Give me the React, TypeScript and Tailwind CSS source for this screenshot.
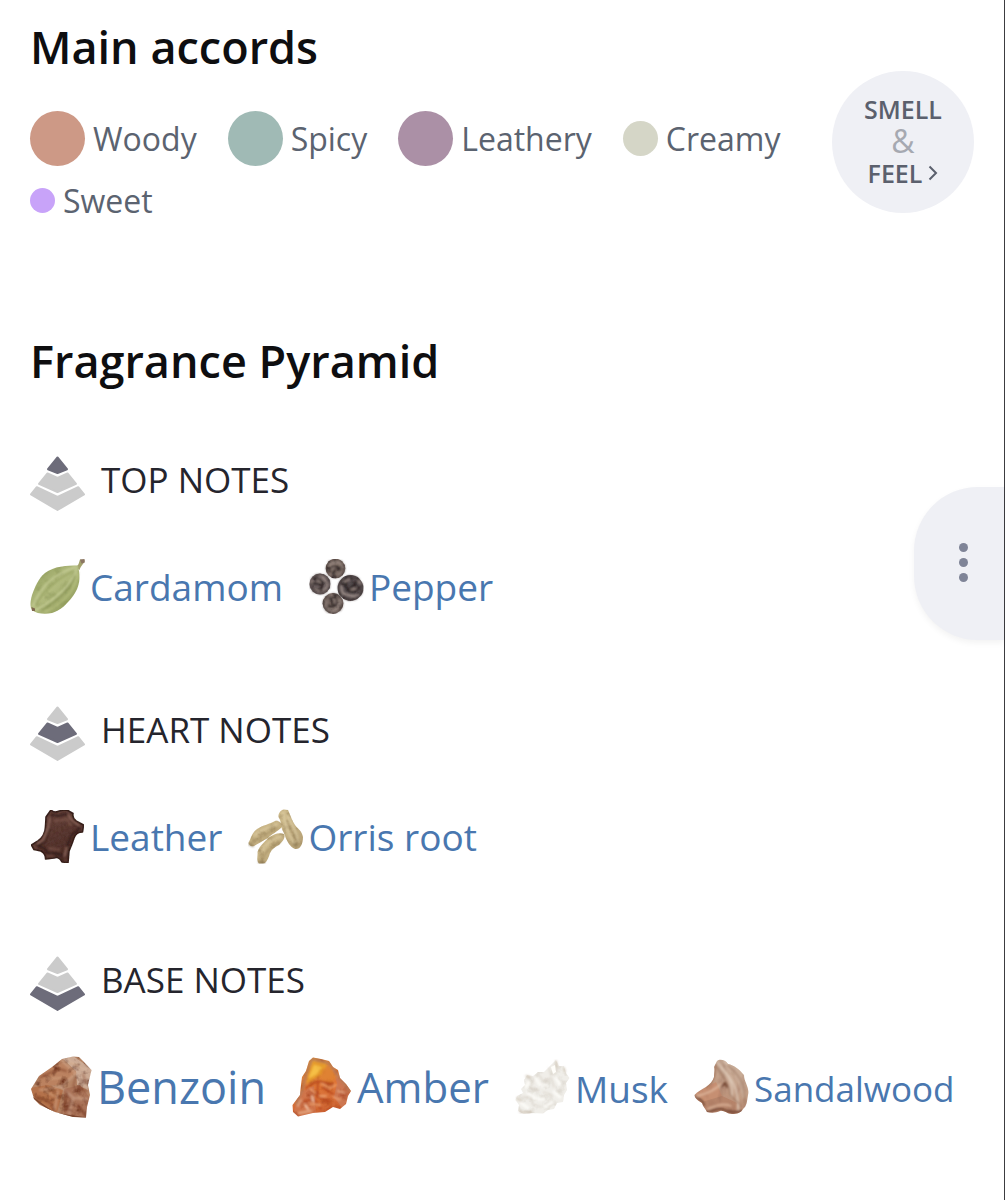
import type { ReactNode } from 'react';

type Tier = 'top' | 'heart' | 'base';

interface Note {
  name: string;
  icon: ReactNode;
  textClass: string;
}

interface NoteGroup {
  tier: Tier;
  title: string;
  notes: Note[];
}

const ACCORDS = [
  { name: 'Woody', dotClass: 'size-[55px] bg-[#cd9986]' },
  { name: 'Spicy', dotClass: 'size-[55px] bg-[#a0bab5]' },
  { name: 'Leathery', dotClass: 'size-[55px] bg-[#ab90a6]' },
  { name: 'Creamy', dotClass: 'size-[35px] bg-[#d5d6c7]' },
  { name: 'Sweet', dotClass: 'size-[25px] bg-[#c8a3f9]' },
];

// Mottled surface used by the ingredient drawings.
function Grain({ id, freq, color, amount }: { id: string; freq: string; color: string; amount: number }) {
  return (
    <filter id={id} x="0" y="0" width="100%" height="100%">
      <feTurbulence type="fractalNoise" baseFrequency={freq} numOctaves="3" seed="4" />
      <feColorMatrix values={`0 0 0 0 0  0 0 0 0 0  0 0 0 0 0  ${amount} 0 0 0 ${-amount * 0.45}`} result="n" />
      <feFlood floodColor={color} />
      <feComposite in2="n" operator="in" />
      <feComposite in2="SourceAlpha" operator="in" result="g" />
      <feMerge>
        <feMergeNode in="SourceGraphic" />
        <feMergeNode in="g" />
      </feMerge>
    </filter>
  );
}

// Softens creases and highlights so they sit in the surface.
function Soft({ id }: { id: string }) {
  return (
    <filter id={id} x="-10%" y="-10%" width="120%" height="120%">
      <feGaussianBlur stdDeviation="0.9" />
    </filter>
  );
}

function PyramidIcon({ active }: { active: Tier }) {
  const fill = (tier: Tier) => (tier === active ? '#6d6c7a' : '#cbcbcb');
  return (
    <svg viewBox="0 0 55 55" className="size-[55px] shrink-0" strokeLinejoin="round" strokeWidth="2" aria-hidden="true">
      <path d="M27.5 1.5 37 13.2 27.5 17 18 13.2Z" fill={fill('top')} stroke={fill('top')} />
      <path d="M17.5 17.5 27.5 22 37.5 17.5 46 27.8 27.5 36 9 27.8Z" fill={fill('heart')} stroke={fill('heart')} />
      <path d="M6.8 31.2 27.5 41 48.2 31.2 54 38.4 27.5 54 1 38.4Z" fill={fill('base')} stroke={fill('base')} />
    </svg>
  );
}

function CardamomIcon() {
  return (
    <svg viewBox="0 0 55 55" className="size-[55px] shrink-0" aria-hidden="true">
      <defs>
        <linearGradient id="cardamom" x1="0.1" y1="0.2" x2="0.8" y2="0.9">
          <stop offset="0" stopColor="#98a464" />
          <stop offset="0.45" stopColor="#b2bb7e" />
          <stop offset="1" stopColor="#929d5c" />
        </linearGradient>
        <Grain id="cardamomGrain" freq="0.12" color="#7c8848" amount={1} />
        <Soft id="cardamomSoft" />
      </defs>
      <path d="M46 8C49 6 49 3 50 0.5L54.5 1C55 4 51 6 49.5 11Z" fill="#a3a26c" />
      <path d="M50 0.5 54.5 0 54.8 3.5 51.5 4.5Z" fill="#8b7563" />
      <g filter="url(#cardamomGrain)">
        <path d="M48 6.5C37 6.5 24 7 15 14 8 20 5 28 2 36 0 43 0 48 2 51 7 55 15 55.5 22 54 31 51 37 45 43 37 51 26 50 17 48 6.5Z" fill="url(#cardamom)" />
      </g>
      <g fill="none" strokeLinecap="round" filter="url(#cardamomSoft)" opacity="0.85">
        <path d="M46 8C32 12 13 21 3 47" stroke="#ccd39e" strokeWidth="1.6" />
        <path d="M47 10C42 24 29 38 6 51" stroke="#cdd49f" strokeWidth="1.8" />
        <path d="M48 13C46 30 34 44 15 53" stroke="#bdc686" strokeWidth="1.5" />
        <path d="M43 12C30 19 14 29 6 46" stroke="#8e9a57" strokeWidth="1.1" />
        <path d="M45 17C39 32 27 42 12 51" stroke="#7f8b4b" strokeWidth="1.2" />
      </g>
      <path d="M1.5 48 5 49.5 5 52 2 52Z" fill="#80674f" />
    </svg>
  );
}

function PepperIcon() {
  const corns = [
    { x: 26.5, y: 9.5, r: 9.8, fill: '#75655d', turn: 0 },
    { x: 11, y: 25, r: 10.5, fill: '#675c5b', turn: 70 },
    { x: 41.5, y: 29, r: 12.9, fill: '#574e50', turn: 200 },
    { x: 24, y: 44.5, r: 10.4, fill: '#756660', turn: 130 },
  ];
  return (
    <svg viewBox="0 0 55 55" className="size-[55px] shrink-0" aria-hidden="true">
      <defs>
        <Grain id="pepperGrain" freq="0.18" color="#261c1d" amount={2.2} />
        <Soft id="pepperSoft" />
      </defs>
      <g filter="url(#pepperGrain)">
        {corns.map(c => (
          <circle key={c.x} cx={c.x} cy={c.y} r={c.r} fill={c.fill} />
        ))}
      </g>
      <g filter="url(#pepperSoft)">
        {corns.map(c => (
          <g key={c.x} transform={`translate(${c.x} ${c.y}) rotate(${c.turn}) scale(${c.r / 10})`} fill="none" strokeLinecap="round">
            <circle r="9" stroke="#463b3a" strokeWidth="1.2" strokeDasharray="5 3 3 2" />
            <path d="M-7-3C-4-7 0-5 2-6S6-4 7-1" stroke="#ab9b94" strokeWidth="1.4" />
            <path d="M-6 3C-5-1-2-3 1-2S6 2 4 5M-3 6C-1 4-2 2 0 0" stroke="#2b2223" strokeWidth="1.8" />
            <path d="M-4 1-1-1M3 6 6 3M-6 6-4 7" stroke="#9a8982" strokeWidth="1.5" />
          </g>
        ))}
      </g>
    </svg>
  );
}

function LeatherIcon() {
  return (
    <svg viewBox="0 0 55 55" className="size-[55px] shrink-0" aria-hidden="true">
      <defs>
        <linearGradient id="leather" x1="0.3" y1="0" x2="0.7" y2="1">
          <stop offset="0" stopColor="#65423a" />
          <stop offset="0.5" stopColor="#593831" />
          <stop offset="1" stopColor="#482b26" />
        </linearGradient>
        <Grain id="leatherGrain" freq="0.35" color="#321b17" amount={0.7} />
        <Soft id="leatherSoft" />
      </defs>
      <g filter="url(#leatherGrain)" strokeLinejoin="round">
        <path
          d="M21 1Q24 4 28 2.5T37 1L43 4.5Q42 9 46 12L53.5 16 52.5 23Q46 23 44 29T39 42L38 53.5 32 53Q29 47 24 49L15.5 50Q16 45 11 42L4 40.5 1.5 36 8 32Q15 27 15.5 18T16 8Z"
          fill="url(#leather)"
          stroke="#38231f"
          strokeWidth="1.6"
        />
      </g>
      <g fill="none" strokeLinejoin="round" filter="url(#leatherSoft)">
        <path
          d="M22 5.5 28 7 36 5 40.5 8 43.5 14 49 18 48 21.5 41.5 26 37.5 36 35.5 47 31 46 26 44.5 18 45 15.5 40 8 36.5 14 33 19 20 20 10Z"
          stroke="#2d1714"
          strokeWidth="1.6"
        />
        <path d="M20 8 18.5 18 13 31 7 34.5M38 5.5 42.5 12 49.5 17M36.5 38 34.5 48" stroke="#a3776a" strokeWidth="1.4" />
        <path d="M24 12 37 10 41 17M18 39 30 41" stroke="#7f574e" strokeWidth="1.8" opacity="0.8" />
        <path d="M4 37 6 40M16 47 24 47M34 51 37 51" stroke="#85594d" strokeWidth="1" />
      </g>
    </svg>
  );
}

function OrrisIcon() {
  return (
    <svg viewBox="0 0 55 55" className="size-[55px] shrink-0" aria-hidden="true">
      <defs>
        <linearGradient id="orris" x1="0" y1="0" x2="0.8" y2="1">
          <stop offset="0" stopColor="#d0bd8e" />
          <stop offset="0.5" stopColor="#c7b385" />
          <stop offset="1" stopColor="#b5a075" />
        </linearGradient>
        <Grain id="orrisGrain" freq="0.18" color="#8d774b" amount={1.4} />
        <Soft id="orrisSoft" />
      </defs>
      <g fill="url(#orris)" filter="url(#orrisGrain)">
        <path d="M36 0.5C33 1 30 4 30.5 8 34 13 32 18 36 24 38 31 42 38 47 40 52 41 55 35 55 28 54 22 50 20 47 16 44 12 42 5 40 1Z" />
        <path d="M0.5 34C3 29 4 24 9 20 15 16 22 15 27 12 31 11 35 15 34 18 29 23 24 25 20 29 14 32 10 35 6 37 3 38 1 36 0.5 34Z" />
        <path d="M11 54.5C8 51 10 47 9.5 43 12 36 16 34 20 29 26 25 31 23 36 25 38 29 34 33 31 36 27 38 24 40 22 44 21 48 19 52 17 54Z" />
      </g>
      <g fill="none" strokeLinecap="round" filter="url(#orrisSoft)" opacity="0.7">
        <path d="M35 3C37 14 39 24 46 34M40 7C42 15 49 20 50 33" stroke="#e4d5ae" strokeWidth="1.8" />
        <path d="M7 26C14 20 21 19 29 15M14 42C18 34 26 29 34 27" stroke="#e4d4ac" strokeWidth="1.8" />
        <path d="M3 34C12 28 20 24 29 19M15 50C17 42 24 37 32 33M44 22 50 34M39 12 43 20" stroke="#937d52" strokeWidth="1.2" />
        <path d="M1 35 5 37M11 53 16 54M46 35 49 36" stroke="#73613e" strokeWidth="1.8" />
      </g>
    </svg>
  );
}

function BenzoinIcon() {
  return (
    <svg viewBox="0 0 62 62" className="-my-1 size-[62px] shrink-0" aria-hidden="true">
      <defs>
        <Grain id="benzoinGrain" freq="0.13" color="#6b2d15" amount={2.3} />
        <Soft id="benzoinSoft" />
        <clipPath id="benzoinShape">
          <path d="M43 0.5 32 3 22 11 9 20 1 33 4 43 10 49 25 56 43 61 56 61.5 57 51 60 39 58 29 61.5 14 53 5 49 1Z" />
        </clipPath>
      </defs>
      <g clipPath="url(#benzoinShape)">
        <g filter="url(#benzoinGrain)">
          <path d="M0 0H62V62H0Z" fill="#b58465" />
          <path d="M30 3 47 17 34 28 9 31 9 20Z" fill="#bb8260" />
          <path d="M43 0 62 13 58 34 47 29 46 15 33 3Z" fill="#ccab95" />
          <path d="M0 32 18 29 33 34 27 57 7 47Z" fill="#b4724c" />
          <path d="M34 33 50 29 60 42 56 62 34 59Z" fill="#aa7359" />
        </g>
        <g fill="none" strokeLinecap="round" filter="url(#benzoinSoft)" opacity="0.7">
          <path d="M31 4 46 17 52 27M46 17 31 31 10 34M37 3 53 13 60 14M31 31 44 42 57 43M28 35 25 53M43 43 39 59" stroke="#dfbfa8" strokeWidth="1.8" opacity="0.7" />
          <path d="M11 21 29 13 36 15M8 41 22 48 24 55M48 31 56 35M48 49 54 58M37 37 34 51 42 55" stroke="#7a3a23" strokeWidth="1.8" />
          <path d="M17 23 31 22M40 7 49 10M14 34 24 40M47 37 51 44" stroke="#d7ab87" strokeWidth="1.5" />
          <path d="M35 34 41 46M46 20 43 31M53 18 56 27M28 59 37 53" stroke="#85472f" strokeWidth="1.3" />
        </g>
        <path d="M2 41 25 57.5 56 62" fill="none" stroke="#7c4830" strokeWidth="1.5" />
      </g>
    </svg>
  );
}

function AmberIcon() {
  return (
    <svg viewBox="0 0 60 60" className="-my-1 size-[60px] shrink-0" aria-hidden="true">
      <defs>
        <linearGradient id="amber" x1="0.3" y1="0" x2="0.6" y2="1">
          <stop offset="0" stopColor="#d98b3c" />
          <stop offset="0.5" stopColor="#de7639" />
          <stop offset="1" stopColor="#ca6034" />
        </linearGradient>
        <Grain id="amberGrain" freq="0.12" color="#a63c14" amount={1.8} />
        <Soft id="amberSoft" />
        <clipPath id="amberShape">
          <path d="M21 0.5 29 2 37 4 41 10 46 13 48 21 54 27 59 34 56 39 54 47 48 52 41 50 33 55 21 56 6 59.5 1 55 0.5 48 8 38 9 28 10 20 14 14 17 4Z" />
        </clipPath>
      </defs>
      <g clipPath="url(#amberShape)">
        <g filter="url(#amberGrain)">
          <path d="M0 0H60V60H0Z" fill="url(#amber)" />
          <path d="M8 35 22 29 24 59 0 60Z" fill="#d0754c" />
          <path d="M39 8 59 34 51 52 42 40 45 26Z" fill="#cd7751" />
        </g>
        <g filter="url(#amberSoft)" opacity="0.85">
          <path d="M20 3 35 7 32 16 14 27Z" fill="#e9a12b" />
          <path d="M22 8 30 10 25 17 16 22Z" fill="#fbcb48" />
          <path d="M31 12 40 9 46 20 38 26 27 22Z" fill="#e08431" opacity="0.8" />
          <g fill="none" strokeLinecap="round">
            <path d="M20 2 14 17 11 31 4 47M20 2 37 6 47 20 58 34" stroke="#b57d58" strokeWidth="2.4" />
            <path d="M14 31 26 24 40 27M26 25 25 39 38 45M31 31 41 37M12 44 22 42 29 52" stroke="#b3421a" strokeWidth="1.8" />
            <path d="M18 32 23 36M30 27 38 31 44 28M28 39 34 39M18 47 28 48M41 40 48 43" stroke="#f3aa78" strokeWidth="1.8" />
            <path d="M6 49 9 43M7 56 19 54M46 34 53 36" stroke="#eab895" strokeWidth="1.8" />
            <path d="M13 48 16 52M20 39 21 44" stroke="#fde1c9" strokeWidth="1.8" />
          </g>
        </g>
      </g>
    </svg>
  );
}

function MuskIcon() {
  return (
    <svg viewBox="0 0 55 55" className="size-[55px] shrink-0" aria-hidden="true">
      <defs>
        <Grain id="muskGrain" freq="0.14" color="#cfc9be" amount={1.6} />
        <Soft id="muskSoft" />
      </defs>
      <g filter="url(#muskGrain)">
        <path
          d="M41 1 44 7 49 7 51 14 54.5 19 51 24 52 31 49 36 48 43 42 44 39 50 33 51 28 54.5 16 54 9 55 3 52 4 46 0.5 41 2 37 8 34 6 30 10 26 9 21 12 16 18 17 23 13 29 13 33 9 37 5Z"
          fill="#f0eee9"
        />
      </g>
      <g fill="none" strokeLinecap="round" strokeLinejoin="round" filter="url(#muskSoft)" opacity="0.8">
        <path d="M34 9 36 16 41 15 40 5M12 19 18 23 15 29 24 31M24 16 28 22 36 19 39 28M8 38 16 38 18 46 27 48M28 33 37 36 34 46" stroke="#d3ccc1" strokeWidth="1.2" />
        <path d="M14 23 11 28M21 20 25 26 32 26M41 19 45 26M13 34 21 40 29 40M6 44 13 49M30 48 37 43M39 33 45 38" stroke="#fffefb" strokeWidth="3" />
        <path d="M41 2 42 8M49 9 50 13M11 17 15 18M2 39 6 42M5 53 16 53" stroke="#c2b39f" strokeWidth="1.4" />
      </g>
      <path d="M36 8 40 6 41 13 38 15Z" fill="#fffefa" />
    </svg>
  );
}

function SandalwoodIcon() {
  return (
    <svg viewBox="0 0 55 55" className="size-[55px] shrink-0" aria-hidden="true">
      <defs>
        <linearGradient id="sandal" x1="0.7" y1="0" x2="0.2" y2="1">
          <stop offset="0" stopColor="#cdb4a0" />
          <stop offset="0.5" stopColor="#c09a82" />
          <stop offset="1" stopColor="#b07a60" />
        </linearGradient>
        <Grain id="sandalGrain" freq="0.12 0.06" color="#89594a" amount={0.9} />
        <Soft id="sandalSoft" />
        <clipPath id="sandalShape">
          <path d="M23 2C25 0 31 0 34 5 40 6 46 11 50 16 50 23 56 29 54 36 53 42 53 47 49 50 47 54 43 55 38 55 33 55 30 51 26 52 22 54 17 54 13 53 11 49 9 48 8 44 5 42 1 40 0.5 36 3 33 8 30 12 28 16 25 19 22 20 18 20 14 21 11 20 8 23 2Z" />
        </clipPath>
      </defs>
      <g clipPath="url(#sandalShape)">
        <g filter="url(#sandalGrain)">
          <path d="M0 0H55V55H0Z" fill="url(#sandal)" />
          <path d="M1 34 22 23 28 37 12 44Z" fill="#c68f72" />
          <path d="M8 43 28 37 43 44 44 55 12 54Z" fill="#b6846a" />
        </g>
        <g fill="none" strokeLinecap="round" filter="url(#sandalSoft)">
          <path d="M24 4C31 14 45 22 44 50M27 9C36 17 39 26 38 38M30 2C44 12 48 24 50 38" stroke="#dcc6b4" strokeWidth="1.8" />
          <path d="M23 8C32 21 36 29 36 35 39 41 46 43 47 48M34 6C46 16 50 26 51 44" stroke="#9b735c" strokeWidth="1.2" />
          <path d="M3 37C12 35 21 31 27 25M14 50C22 46 30 44 37 47" stroke="#dcb49a" strokeWidth="1.8" />
          <path d="M1 38C7 40 9 42 10 46M28 27 31 24 33 28M11 53C19 52 23 49 28 50 33 53 39 54 48 52" stroke="#6e402d" strokeWidth="1.8" />
          <path d="M22 5C20 14 22 20 12 28" stroke="#9b6a50" strokeWidth="1.6" />
        </g>
      </g>
    </svg>
  );
}

const GROUPS: NoteGroup[] = [
  {
    tier: 'top',
    title: 'TOP NOTES',
    notes: [
      { name: 'Cardamom', icon: <CardamomIcon />, textClass: 'text-[37px]' },
      { name: 'Pepper', icon: <PepperIcon />, textClass: 'text-[37px]' },
    ],
  },
  {
    tier: 'heart',
    title: 'HEART NOTES',
    notes: [
      { name: 'Leather', icon: <LeatherIcon />, textClass: 'text-[37px]' },
      { name: 'Orris root', icon: <OrrisIcon />, textClass: 'text-[37px]' },
    ],
  },
  {
    tier: 'base',
    title: 'BASE NOTES',
    notes: [
      { name: 'Benzoin', icon: <BenzoinIcon />, textClass: 'text-[45px]' },
      { name: 'Amber', icon: <AmberIcon />, textClass: 'text-[42px]' },
      { name: 'Musk', icon: <MuskIcon />, textClass: 'text-[37px] pt-1' },
      { name: 'Sandalwood', icon: <SandalwoodIcon />, textClass: 'text-[35px] pt-1' },
    ],
  },
];

export default function App() {
  return (
    <div className="relative min-h-screen bg-white border-r border-[#3c3c40] px-[30px] pt-[25px] pb-20 font-['Open_Sans','Noto_Sans',sans-serif]">
      {/* Main accords */}
      <section>
        <h2 className="text-[45px] leading-[44px] font-semibold text-[#0e0e10]">Main accords</h2>
        <div className="mt-0.5 flex items-start justify-between gap-5">
          <ul className="flex flex-1 flex-wrap items-center gap-x-[31px] gap-y-3 pt-10">
            {ACCORDS.map(a => (
              <li key={a.name} className="flex items-center gap-2 text-[32px] leading-[45px] text-[#5b6370]">
                <span className={`rounded-full shrink-0 ${a.dotClass}`} />
                {a.name}
              </li>
            ))}
          </ul>
          <button
            type="button"
            className="flex size-[142px] shrink-0 flex-col items-center justify-center rounded-full bg-[#eff0f5] pb-0.5 text-[25px] leading-8 font-semibold text-[#5b606d] cursor-pointer"
          >
            <span>SMELL</span>
            <span className="text-[32px] leading-8 font-normal text-[#a6a9b1]">&amp;</span>
            <span className="flex items-center gap-1.5">
              FEEL
              <svg viewBox="0 0 10 16" className="h-4 w-2.5" fill="none" stroke="currentColor" strokeWidth="2" aria-hidden="true">
                <path d="M1.5 1.5 8 8 1.5 14.5" />
              </svg>
            </span>
          </button>
        </div>
      </section>

      {/* Fragrance pyramid */}
      <section className="mt-[116px]">
        <h2 className="text-[45px] leading-[44px] font-semibold text-[#0e0e10]">Fragrance Pyramid</h2>
        <div className="mt-[73px] flex flex-col gap-[92px]">
          {GROUPS.map(g => (
            <div key={g.tier} className="flex flex-col gap-12">
              <h3 className="flex items-start gap-4 text-[35px] leading-[48px] text-[#25252d]">
                <PyramidIcon active={g.tier} />
                {g.title}
              </h3>
              <div className="flex flex-wrap items-center gap-x-[26px] gap-y-4">
                {g.notes.map(n => (
                  <a key={n.name} href="#" className="flex items-center gap-[5px] leading-[50px] text-[#4977af]">
                    {n.icon}
                    <span className={n.textClass}>{n.name}</span>
                  </a>
                ))}
              </div>
            </div>
          ))}
        </div>
      </section>

      {/* Side menu handle */}
      <button
        type="button"
        aria-label="More"
        className="absolute top-[487px] right-0 flex h-[153px] w-[90px] flex-col items-center justify-center gap-1.5 rounded-l-[64px] bg-[#eff0f5] pb-0.5 pl-2 shadow-[0_3px_6px_rgba(0,0,0,0.05)] cursor-pointer"
      >
        <span className="size-[9px] rounded-full bg-[#7f8497]" />
        <span className="size-[9px] rounded-full bg-[#7f8497]" />
        <span className="size-[9px] rounded-full bg-[#7f8497]" />
      </button>
    </div>
  );
}
